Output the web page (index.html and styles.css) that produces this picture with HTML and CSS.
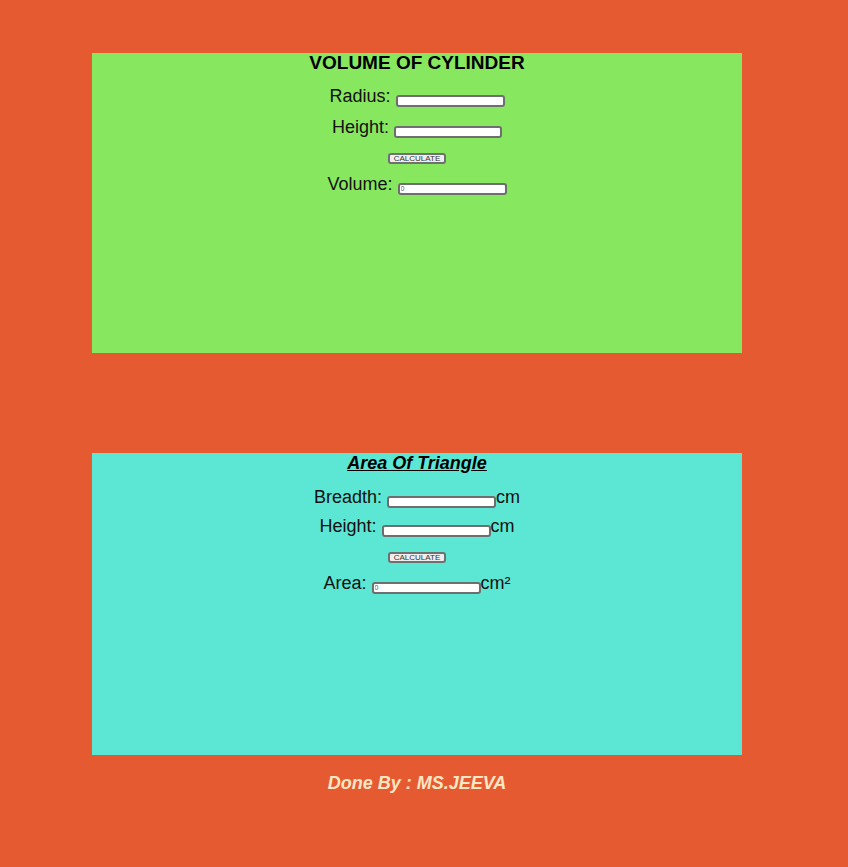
FILE: index.html
```html
<!DOCTYPE html>
<html>
<head>
<meta charset="utf-8">
<link rel="stylesheet" href="styles.css">
</head>
<body>
<div class="panel cyl">
  <h2 class="title">VOLUME OF CYLINDER</h2>
  <div class="row r1">Radius: <input class="box" type="text"></div>
  <div class="row r2">Height: <input class="box b2" type="text"></div>
  <div class="btnrow"><button class="btn">CALCULATE</button></div>
  <div class="row r4">Volume: <input class="box" type="text" value="0"></div>
</div>
<div class="panel tri">
  <h2 class="title ital">Area Of Triangle</h2>
  <div class="row s1">Breadth: <input class="box" type="text">cm</div>
  <div class="row s2">Height: <input class="box" type="text">cm</div>
  <div class="btnrow"><button class="btn">CALCULATE</button></div>
  <div class="row s4">Area: <input class="box" type="text" value="0">cm²</div>
</div>
<p class="footer">Done By : MS.JEEVA</p>
</body>
</html>
```
FILE: styles.css
```css
html, body {
  margin: 0;
  padding: 0;
  background: #e65a32;
  font-family: "Liberation Sans", Arial, sans-serif;
}
body {
  padding-top: 53px;
  height: 867px;
  box-sizing: border-box;
}
.panel {
  width: 650px;
  margin-left: 92px;
  height: 300px;
  text-align: center;
  color: #111;
  overflow: hidden;
}
.cyl { background: #87e85f; }
.tri { background: #5ce6d4; margin-top: 100px; height: 302px; }
.title {
  margin: 0;
  font-size: 19px;
  line-height: 20px;
  font-weight: bold;
  color: #000;
}
.ital {
  font-size: 18px;
  font-style: italic;
  text-decoration: underline;
}
.row {
  font-size: 18px;
  line-height: 20px;
  height: 20px;
}
.r1 { margin-top: 13px; }
.r2 { margin-top: 11px; }
.r4 { margin-top: 9px; }
.s1 { margin-top: 14px; }
.s2 { margin-top: 9px; }
.s4 { margin-top: 9px; }
.btnrow {
  margin-top: 16px;
  height: 12px;
  line-height: 12px;
  font-size: 0;
}
.box {
  width: 109px;
  height: 12px;
  box-sizing: border-box;
  border: 2px solid #6e6e6e;
  border-radius: 3px;
  background: #fff;
  font-size: 7px;
  font-family: "Liberation Sans", Arial, sans-serif;
  padding: 0 1px;
  margin: 0;
  vertical-align: -1px;
  color: #555;
}
.b2 { width: 108px; }
.btn {
  width: 58px;
  height: 11px;
  font-size: 8px;
  line-height: 7px;
  padding: 0;
  font-family: "Liberation Sans", Arial, sans-serif;
  color: #333;
  background: #efefef;
  border: 2px solid #707070;
  border-radius: 3px;
  vertical-align: top;
}
.footer {
  margin: 18px 0 0 92px;
  width: 650px;
  text-align: center;
  font-size: 18px;
  line-height: 20px;
  font-weight: bold;
  font-style: italic;
  color: #ffe6c4;
}
```
